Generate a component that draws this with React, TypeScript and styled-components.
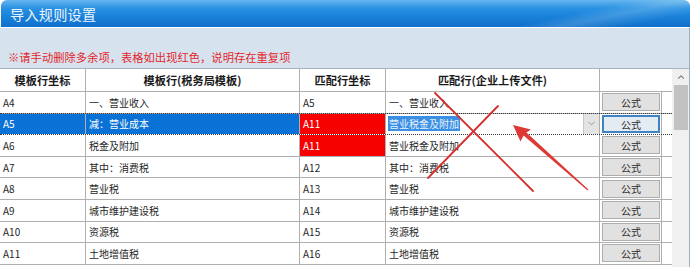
import React from 'react';
import styled, { createGlobalStyle, css } from 'styled-components';
import { ChevronDown, ChevronUp } from 'lucide-react';

const GlobalStyle = createGlobalStyle`
  html, body { margin: 0; padding: 0; background: #ffffff; }
  body { font-family: "Noto Sans CJK SC", "Noto Sans", sans-serif; }
  * { box-sizing: border-box; }
`;

const Window = styled.div`
  position: relative;
  width: 690px;
  height: 267px;
  overflow: hidden;
  display: flex;
  flex-direction: column;
`;

const TitleBar = styled.div`
  height: 27px;
  margin: 0 0 1px 1px;
  border-radius: 6px 6px 0 0;
  background:
    linear-gradient(168deg, transparent 78%, rgba(255,255,255,0.16) 84%, transparent 92%),
    linear-gradient(to bottom, #66b6ef 0%, #2a92e2 30%, #1a82da 60%, #0f70cb 100%);
  display: flex;
  align-items: center;
  padding-left: 9px;
  color: #eaf4fd;
  font-size: 14.2px;
  letter-spacing: 0.2px;
`;

const Panel = styled.div`
  flex: 1;
  min-height: 0;
  background: #d6e3ef;
  border-right: 1px solid #9fb0c0;
  display: flex;
  flex-direction: column;
`;

const Notice = styled.div`
  height: 40px;
  padding: 21px 0 0 8px;
  color: #e5262b;
  font-size: 11.3px;
  line-height: 16px;
`;

const GridArea = styled.div`
  flex: 1;
  min-height: 0;
  display: flex;
  background: #ffffff;
  border-top: 1px solid #a9b3bd;
`;

const Table = styled.div`
  width: 672px;
  display: flex;
  flex-direction: column;
`;

const columns = '86px 214px 86px 214px 62px 10px';
const line = '#afafaf';

const HeaderRow = styled.div`
  display: grid;
  grid-template-columns: ${columns};
  height: 23px;
  border-bottom: 1px solid ${line};
`;

const HeaderCell = styled.div<{ $span?: number }>`
  grid-column: span ${(p) => p.$span ?? 1};
  display: flex;
  align-items: center;
  justify-content: center;
  font-size: 11.2px;
  font-weight: 700;
  color: #1a1a1a;
  border-right: ${(p) => (p.$span ? 'none' : `1px solid ${line}`)};
`;

const Row = styled.div<{ $selected?: boolean }>`
  display: grid;
  grid-template-columns: ${columns};
  height: 21.6px;
  flex: none;
  border-bottom: 1px solid ${line};
  ${(p) =>
    p.$selected &&
    css`
      margin-top: -1px;
      height: 22.6px;
      border-top: 1px dotted #3a3a3a;
      border-bottom: 1px dotted #3a3a3a;
    `}
`;

type Tone = 'plain' | 'selected' | 'dup';

const Cell = styled.div<{ $tone?: Tone }>`
  display: flex;
  align-items: center;
  padding-left: 3px;
  font-size: 10px;
  color: #1f1f1f;
  border-right: 1px solid ${line};
  white-space: nowrap;
  overflow: hidden;
  ${(p) =>
    p.$tone === 'selected' &&
    css`
      background: #0a72d6;
      color: #ffffff;
    `}
  ${(p) =>
    p.$tone === 'dup' &&
    css`
      background: #f60000;
      color: #ffffff;
    `}
`;

const ComboCell = styled.div`
  display: flex;
  align-items: stretch;
  border-right: 1px solid ${line};
  background: #ffffff;
  padding-left: 2px;
`;

const ComboText = styled.div`
  flex: 1;
  display: flex;
  align-items: center;
`;

const Highlight = styled.span`
  background: #3a8fe4;
  color: #eaf3fc;
  font-size: 10px;
  line-height: 15px;
  padding: 0 1px;
`;

const DropButton = styled.div`
  width: 16px;
  display: flex;
  align-items: center;
  justify-content: center;
  background: #e4e4e4;
  border-left: 1px solid #c9c9c9;
  color: #777777;
`;

const ButtonCell = styled.div`
  display: flex;
  align-items: center;
  padding-left: 2px;
  border-right: 1px solid ${line};
`;

const FormulaButton = styled.button<{ $focused?: boolean }>`
  width: 58px;
  height: 18px;
  padding: 0;
  font-family: inherit;
  font-size: 10px;
  color: #2b2b2b;
  background: #e1e1e1;
  border: 1px solid #adadad;
  ${(p) =>
    p.$focused &&
    css`
      border: 2px solid #3f83c4;
      background: #e3ebf3;
    `}
`;

const Filler = styled.div``;

const Scrollbar = styled.div`
  width: 17px;
  background: #f0f0f0;
  display: flex;
  flex-direction: column;
  align-items: center;
`;

const ScrollArrow = styled.div`
  height: 16px;
  display: flex;
  align-items: center;
  justify-content: center;
  color: #606060;
`;

const Thumb = styled.div`
  width: 14px;
  height: 45px;
  background: #c2c2c2;
`;

const Overlay = styled.svg`
  position: absolute;
  top: 0;
  left: 0;
  pointer-events: none;
`;

type RowData = {
  code: string;
  name: string;
  matchCode: string;
  matchName: string;
  selected?: boolean;
  dup?: boolean;
};

const rows: RowData[] = [
  { code: 'A4', name: '一、营业收入', matchCode: 'A5', matchName: '一、营业收入' },
  { code: 'A5', name: '减：营业成本', matchCode: 'A11', matchName: '营业税金及附加', selected: true, dup: true },
  { code: 'A6', name: '税金及附加', matchCode: 'A11', matchName: '营业税金及附加', dup: true },
  { code: 'A7', name: '其中：消费税', matchCode: 'A12', matchName: '其中：消费税' },
  { code: 'A8', name: '营业税', matchCode: 'A13', matchName: '营业税' },
  { code: 'A9', name: '城市维护建设税', matchCode: 'A14', matchName: '城市维护建设税' },
  { code: 'A10', name: '资源税', matchCode: 'A15', matchName: '资源税' },
  { code: 'A11', name: '土地增值税', matchCode: 'A16', matchName: '土地增值税' },
];

export default function App() {
  return (
    <>
      <GlobalStyle />
      <Window>
        <TitleBar>导入规则设置</TitleBar>
        <Panel>
          <Notice>※请手动删除多余项，表格如出现红色，说明存在重复项</Notice>
          <GridArea>
            <Table>
              <HeaderRow>
                <HeaderCell>模板行坐标</HeaderCell>
                <HeaderCell>模板行(税务局模板)</HeaderCell>
                <HeaderCell>匹配行坐标</HeaderCell>
                <HeaderCell>匹配行(企业上传文件)</HeaderCell>
                <HeaderCell $span={2} />
              </HeaderRow>
              {rows.map((r) => (
                <Row key={r.code} $selected={r.selected}>
                  <Cell $tone={r.selected ? 'selected' : 'plain'}>{r.code}</Cell>
                  <Cell $tone={r.selected ? 'selected' : 'plain'}>{r.name}</Cell>
                  <Cell $tone={r.dup ? 'dup' : 'plain'}>{r.matchCode}</Cell>
                  {r.selected ? (
                    <ComboCell>
                      <ComboText>
                        <Highlight>{r.matchName}</Highlight>
                      </ComboText>
                      <DropButton>
                        <ChevronDown size={11} strokeWidth={1.5} />
                      </DropButton>
                    </ComboCell>
                  ) : (
                    <Cell>{r.matchName}</Cell>
                  )}
                  <ButtonCell>
                    <FormulaButton $focused={r.selected}>公式</FormulaButton>
                  </ButtonCell>
                  <Filler />
                </Row>
              ))}
            </Table>
            <Scrollbar>
              <ScrollArrow>
                <ChevronUp size={10} strokeWidth={2.5} />
              </ScrollArrow>
              <Thumb />
            </Scrollbar>
          </GridArea>
        </Panel>
        <Overlay width="692" height="267" viewBox="0 0 692 267">
          <g stroke="#d6302e" strokeWidth="1.8" strokeLinecap="round" fill="none">
            <line x1="435" y1="93" x2="533" y2="191" />
            <line x1="498" y1="106" x2="428" y2="178" />
          </g>
          <polygon
            fill="#dd3a35"
            points="513,125 531,129.5 526.4,132.6 588.4,189.6 587.6,190.4 523.6,135.4 520.5,141.5"
          />
        </Overlay>
      </Window>
    </>
  );
}
